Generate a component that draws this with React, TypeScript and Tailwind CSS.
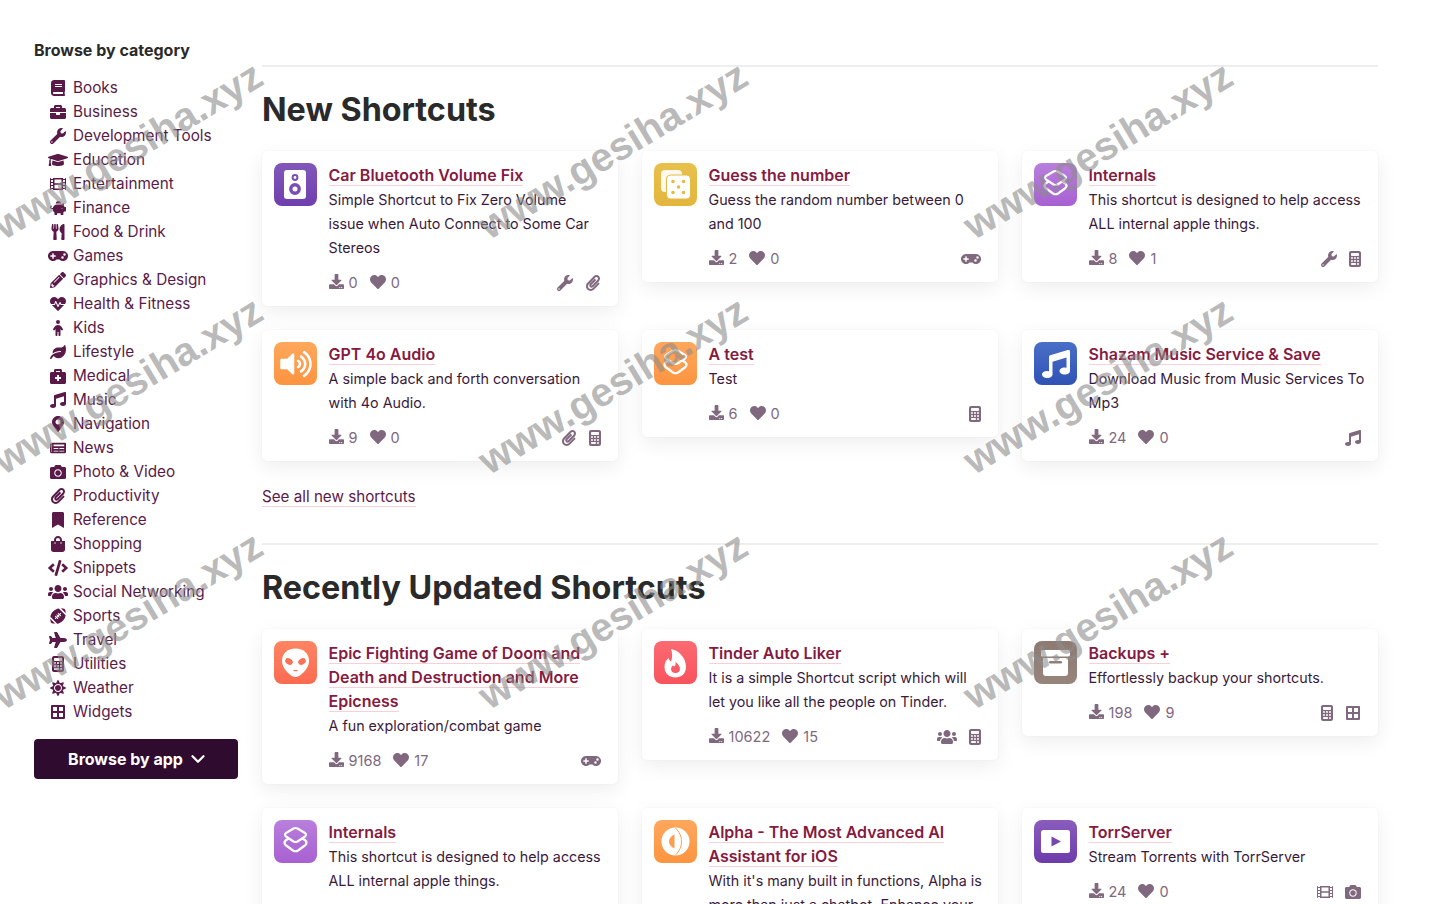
import type { ReactNode } from "react";
import { ChevronDown } from "lucide-react";
import type { IconType } from "react-icons";
import {
  FaBook,
  FaBorderAll,
  FaBookmark,
  FaBriefcase,
  FaBriefcaseMedical,
  FaCamera,
  FaCode,
  FaDownload,
  FaFilm,
  FaFootballBall,
  FaGamepad,
  FaGraduationCap,
  FaHeart,
  FaHeartbeat,
  FaLeaf,
  FaMapMarkerAlt,
  FaMusic,
  FaNewspaper,
  FaPaperclip,
  FaPencilAlt,
  FaPiggyBank,
  FaPlane,
  FaShoppingBag,
  FaSun,
  FaUsers,
  FaUtensils,
  FaVolumeUp,
  FaWrench,
} from "react-icons/fa";
import { FaCalculator, FaChild } from "react-icons/fa6";

const categories: { label: string; icon: IconType }[] = [
  { label: "Books", icon: FaBook },
  { label: "Business", icon: FaBriefcase },
  { label: "Development Tools", icon: FaWrench },
  { label: "Education", icon: FaGraduationCap },
  { label: "Entertainment", icon: FaFilm },
  { label: "Finance", icon: FaPiggyBank },
  { label: "Food & Drink", icon: FaUtensils },
  { label: "Games", icon: FaGamepad },
  { label: "Graphics & Design", icon: FaPencilAlt },
  { label: "Health & Fitness", icon: FaHeartbeat },
  { label: "Kids", icon: FaChild },
  { label: "Lifestyle", icon: FaLeaf },
  { label: "Medical", icon: FaBriefcaseMedical },
  { label: "Music", icon: FaMusic },
  { label: "Navigation", icon: FaMapMarkerAlt },
  { label: "News", icon: FaNewspaper },
  { label: "Photo & Video", icon: FaCamera },
  { label: "Productivity", icon: FaPaperclip },
  { label: "Reference", icon: FaBookmark },
  { label: "Shopping", icon: FaShoppingBag },
  { label: "Snippets", icon: FaCode },
  { label: "Social Networking", icon: FaUsers },
  { label: "Sports", icon: FaFootballBall },
  { label: "Travel", icon: FaPlane },
  { label: "Utilities", icon: FaCalculator },
  { label: "Weather", icon: FaSun },
  { label: "Widgets", icon: FaBorderAll },
];

// react-icons forces a square box, so the non-square glyphs need their own width
function iconBox(icon: IconType) {
  if ([FaGamepad, FaGraduationCap, FaUsers, FaCode].includes(icon)) return "h-4 w-5";
  if (icon === FaPlane) return "h-4 w-[18px]";
  if (icon === FaCalculator) return "h-4 w-3";
  return "size-4";
}

// App glyphs, all drawn on a 43x43 box
function Speaker() {
  return (
    <svg viewBox="0 0 43 43" className="size-full">
      <rect x="10" y="7" width="22" height="29" rx="3" fill="#fff" />
      <circle cx="21" cy="14.5" r="2.4" fill="none" stroke="#7a4db5" strokeWidth="2" />
      <circle cx="21" cy="26" r="4.2" fill="none" stroke="#7a4db5" strokeWidth="3.4" />
    </svg>
  );
}

function Dice() {
  return (
    <svg viewBox="0 0 43 43" className="size-full">
      <rect x="7" y="7" width="21" height="22" rx="4" fill="#fff" fillOpacity="0.9" />
      <rect x="12.5" y="12" width="24" height="24" rx="4" fill="#fff" stroke="#e5bb45" strokeWidth="1" />
      <g fill="#e5bb45">
        <circle cx="19" cy="18.5" r="1.8" />
        <circle cx="29.5" cy="18.5" r="1.8" />
        <circle cx="24.5" cy="24" r="1.8" />
        <circle cx="19" cy="29.5" r="1.8" />
        <circle cx="29.5" cy="29.5" r="1.8" />
      </g>
    </svg>
  );
}

function Layers() {
  return (
    <svg viewBox="0 0 43 43" className="size-full" fill="none" stroke="#fff" strokeWidth="2.2" strokeLinejoin="round">
      <path d="M19.5 8.5 Q21.5 7.5 23.5 8.5 L31 13 Q33 14.8 31 16.5 L23.5 21.5 Q21.5 22.5 19.5 21.5 L12 16.5 Q10 14.8 12 13 Z" />
      <path d="M14.5 18.5 L11.5 20.5 Q9.5 23 11.5 25 L19 30.5 Q21.5 32 24 30.5 L31.5 25 Q33.5 23 31.5 20.5 L28.5 18.5" />
    </svg>
  );
}

function Alien() {
  return (
    <svg viewBox="0 0 43 43" className="size-full">
      <path
        d="M21.5 7.5 C30 7.5 35 13 35 20 C35 28 26 36 21.5 36 C17 36 8 28 8 20 C8 13 13 7.5 21.5 7.5 Z"
        fill="#fff"
      />
      <ellipse cx="15" cy="20.5" rx="4" ry="3" transform="rotate(30 15 20.5)" fill="#fb6f53" />
      <ellipse cx="28" cy="20.5" rx="4" ry="3" transform="rotate(-30 28 20.5)" fill="#fb6f53" />
      <rect x="19.5" y="29" width="4" height="1.2" fill="#fb6f53" />
    </svg>
  );
}

function Flame() {
  return (
    <svg viewBox="0 0 43 43" className="size-full">
      <path
        d="M17 8 C24 9 32 16 32 26 C32 33 27 36.5 21.5 36.5 C15.5 36.5 10.5 32.5 10.5 26 C10.5 22 12 19 14.5 17 C15 19 16 20 17 20.5 C18.5 17 18.5 12 17 8 Z"
        fill="#fff"
      />
      <path
        d="M21.5 21 C24 23 26 25.5 26 28 C26 30.5 24 32 21.5 32 C19 32 17 30.5 17 28 C17 26.5 18 25 19 24.5 C19.5 25 20 25.5 20.5 25.5 C21.5 24.5 21.7 23 21.5 21 Z"
        fill="#f95c66"
      />
    </svg>
  );
}

function ArchiveBox() {
  return (
    <svg viewBox="0 0 43 43" className="size-full">
      <rect x="7" y="9" width="29" height="6.5" rx="1.5" fill="#fff" />
      <path d="M9 17 H34 V32 Q34 35 31 35 H12 Q9 35 9 32 Z" fill="#fff" />
      <rect x="15" y="20" width="13" height="2.4" rx="1.2" fill="#927e76" />
    </svg>
  );
}

function AlphaMark() {
  return (
    <svg viewBox="0 0 43 43" className="size-full">
      <circle cx="21.5" cy="21.5" r="14" fill="#fff" />
      <path d="M20.5 14.5 C17 16 15 18.5 15 21.5 C15 24.5 17 27 20.5 28.5 Z" fill="#fd9e4e" />
      <path d="M21.5 8 C25.5 12 27.5 16.5 27.5 21.5 C27.5 26.5 25.5 31 21.5 35" fill="none" stroke="#fd9e4e" strokeWidth="1" />
    </svg>
  );
}

function PlayScreen() {
  return (
    <svg viewBox="0 0 43 43" className="size-full">
      <rect x="7" y="10" width="29" height="23" rx="2.5" fill="#fff" />
      <path d="M17.5 16.5 L27 21.5 L17.5 26.5 Z" fill="#7647b0" />
    </svg>
  );
}

type Shortcut = {
  title: string;
  desc: string;
  downloads: number;
  likes: number;
  tile: string;
  art: ReactNode;
  tags: IconType[];
};

const newShortcuts: Shortcut[] = [
  {
    title: "Car Bluetooth Volume Fix",
    desc: "Simple Shortcut to Fix Zero Volume issue when Auto Connect to Some Car Stereos",
    downloads: 0,
    likes: 0,
    tile: "from-[#8257b9] to-[#6f3fae]",
    art: <Speaker />,
    tags: [FaWrench, FaPaperclip],
  },
  {
    title: "Guess the number",
    desc: "Guess the random number between 0 and 100",
    downloads: 2,
    likes: 0,
    tile: "from-[#e8c04c] to-[#e3b53c]",
    art: <Dice />,
    tags: [FaGamepad],
  },
  {
    title: "Internals",
    desc: "This shortcut is designed to help access ALL internal apple things.",
    downloads: 8,
    likes: 1,
    tile: "from-[#b87fdc] to-[#a860d2]",
    art: <Layers />,
    tags: [FaWrench, FaCalculator],
  },
  {
    title: "GPT 4o Audio",
    desc: "A simple back and forth conversation with 4o Audio.",
    downloads: 9,
    likes: 0,
    tile: "from-[#fea75c] to-[#fd9440]",
    art: (
      <div className="flex size-full items-center justify-center text-white">
        <FaVolumeUp className="h-7 w-8" />
      </div>
    ),
    tags: [FaPaperclip, FaCalculator],
  },
  {
    title: "A test",
    desc: "Test",
    downloads: 6,
    likes: 0,
    tile: "from-[#fea75c] to-[#fd9440]",
    art: <Layers />,
    tags: [FaCalculator],
  },
  {
    title: "Shazam Music Service & Save",
    desc: "Download Music from Music Services To Mp3",
    downloads: 24,
    likes: 0,
    tile: "from-[#4a6fc7] to-[#2f52b5]",
    art: (
      <div className="flex size-full items-center justify-center text-white">
        <FaMusic className="size-7" />
      </div>
    ),
    tags: [FaMusic],
  },
];

const updatedShortcuts: Shortcut[] = [
  {
    title: "Epic Fighting Game of Doom and Death and Destruction and More Epicness",
    desc: "A fun exploration/combat game",
    downloads: 9168,
    likes: 17,
    tile: "from-[#fd8463] to-[#fb6b50]",
    art: <Alien />,
    tags: [FaGamepad],
  },
  {
    title: "Tinder Auto Liker",
    desc: "It is a simple Shortcut script which will let you like all the people on Tinder.",
    downloads: 10622,
    likes: 15,
    tile: "from-[#fb6a72] to-[#f9525c]",
    art: <Flame />,
    tags: [FaUsers, FaCalculator],
  },
  {
    title: "Backups +",
    desc: "Effortlessly backup your shortcuts.",
    downloads: 198,
    likes: 9,
    tile: "from-[#8d7a72] to-[#97847b]",
    art: <ArchiveBox />,
    tags: [FaCalculator, FaBorderAll],
  },
  {
    title: "Internals",
    desc: "This shortcut is designed to help access ALL internal apple things.",
    downloads: 8,
    likes: 1,
    tile: "from-[#b87fdc] to-[#a860d2]",
    art: <Layers />,
    tags: [FaWrench, FaCalculator],
  },
  {
    title: "Alpha - The Most Advanced AI Assistant for iOS",
    desc: "With it's many built in functions, Alpha is more than just a chatbot. Enhance your",
    downloads: 51,
    likes: 2,
    tile: "from-[#fea75c] to-[#fd9440]",
    art: <AlphaMark />,
    tags: [FaWrench],
  },
  {
    title: "TorrServer",
    desc: "Stream Torrents with TorrServer",
    downloads: 24,
    likes: 0,
    tile: "from-[#8a5cbd] to-[#6c3cab]",
    art: <PlayScreen />,
    tags: [FaFilm, FaCamera],
  },
];

function ShortcutCard({ item }: { item: Shortcut }) {
  return (
    <article className="flex gap-[11.5px] rounded-[5px] bg-white p-3 pb-[11px] shadow-[0_6px_20px_rgba(0,0,0,0.07),0_0_2px_rgba(0,0,0,0.06)]">
      <div className={`size-[43px] shrink-0 overflow-hidden rounded-lg bg-gradient-to-b ${item.tile}`}>
        {item.art}
      </div>
      <div className="min-w-0 flex-1 pr-[1.5px]">
        <h3 className="mb-px text-base leading-6 font-semibold text-[#861a3f]">
          <a href="#" className="border-b border-[#f9d0d5]">
            {item.title}
          </a>
        </h3>
        <p className="text-[14.3px] leading-6 text-[#3a1a3c]">{item.desc}</p>
        <div className="mt-[11px] flex h-6 items-center justify-between pr-[3.5px] text-[14.5px] text-[#80697f]">
          <div className="flex items-center">
            <FaDownload className="mr-[5px] mb-[3px] size-[15px]" />
            <span>{item.downloads}</span>
            <FaHeart className="mr-[5px] mb-[3px] ml-3 size-4" />
            <span>{item.likes}</span>
          </div>
          <div className="flex items-center gap-3">
            {item.tags.map((Tag, i) => (
              <Tag key={i} className={iconBox(Tag)} />
            ))}
          </div>
        </div>
      </div>
    </article>
  );
}

function Section({ title, items }: { title: string; items: Shortcut[] }) {
  return (
    <section>
      <hr className="border-t-2 border-[#eeeeee]" />
      <h2 className="mt-[23px] mb-[21px] text-[32.3px] leading-10 font-bold text-[#2a2a2a]">{title}</h2>
      <div className="grid grid-cols-3 items-start gap-6">
        {items.map((item) => (
          <ShortcutCard key={item.title + item.downloads} item={item} />
        ))}
      </div>
    </section>
  );
}

export default function App() {
  return (
    <div className="relative h-screen overflow-hidden bg-white font-['Inter',sans-serif]">
      <div className="flex gap-6 pr-16 pl-[34px]">
        <aside className="w-[204px] shrink-0 pt-[38px]">
          <h4 className="text-base leading-6 font-bold text-[#2a2a2a]">Browse by category</h4>
          <ul className="mt-[14px] mb-[15px]">
            {categories.map(({ label, icon: Icon }) => (
              <li key={label} className="flex h-6 items-center text-[15.3px] text-[#5a1a49]">
                <span className="flex w-[39px] shrink-0 justify-center pl-[9px]">
                  <Icon className={`${iconBox(Icon)} shrink-0`} />
                </span>
                {label}
              </li>
            ))}
          </ul>
          <button className="flex h-10 w-full items-center justify-center gap-1 rounded bg-[#2f0c2f] pl-[5px] text-base font-bold text-white">
            Browse by app
            <ChevronDown className="size-[22px]" strokeWidth={2.5} />
          </button>
        </aside>

        <main className="min-w-0 flex-1 pt-[65px]">
          <Section title="New Shortcuts" items={newShortcuts} />
          <p className="mt-6 mb-[34px] text-[15.2px] leading-6 text-[#5a1a49]">
            <a href="#" className="border-b border-[#f9d0d5]">
              See all new shortcuts
            </a>
          </p>
          <Section title="Recently Updated Shortcuts" items={updatedShortcuts} />
        </main>
      </div>

      {/* Watermark tiled over the page */}
      <div className="pointer-events-none absolute top-[32px] left-[-115px] grid grid-cols-[repeat(3,485px)] grid-rows-[repeat(3,235px)] font-['Liberation_Sans',sans-serif] text-[40px] font-bold text-[#8c8c8c]/60">
        {Array.from({ length: 9 }).map((_, i) => (
          <div key={i} className="flex items-center justify-center">
            <span className="-rotate-[31deg] whitespace-nowrap">www.gesiha.xyz</span>
          </div>
        ))}
      </div>
    </div>
  );
}
